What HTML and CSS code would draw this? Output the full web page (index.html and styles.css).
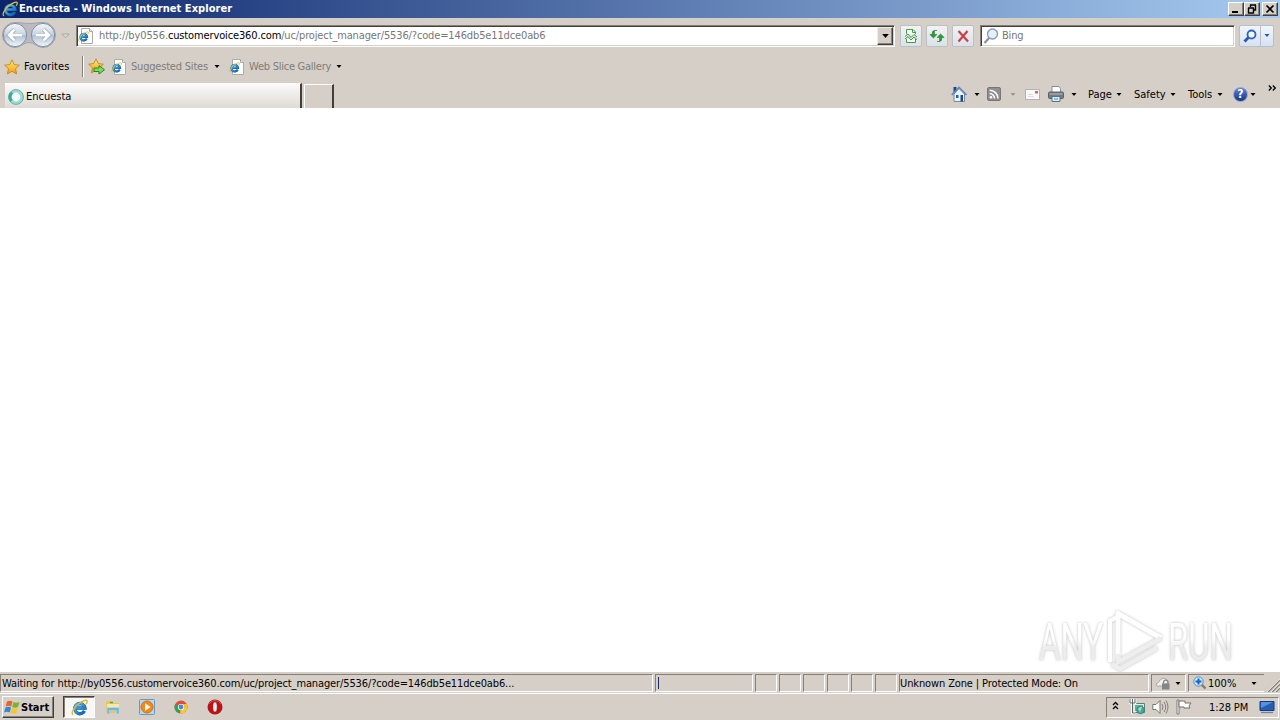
FILE: index.html
```html
<!DOCTYPE html>
<html lang="en">
<head>
<meta charset="UTF-8" />
<title>Encuesta - Windows Internet Explorer</title>
<link rel="stylesheet" href="styles.css">
</head>
<body>
<svg width="0" height="0" class="defs">
  <defs>
    <linearGradient id="blueRing" x1="0" y1="0" x2="1" y2="1">
      <stop offset="0" stop-color="#5cc4f2" /><stop offset="1" stop-color="#0b5fae" />
    </linearGradient>
    <linearGradient id="gold" x1="0" y1="0" x2="0" y2="1">
      <stop offset="0" stop-color="#fff07a" /><stop offset="1" stop-color="#f29a12" />
    </linearGradient>
    <linearGradient id="glass" x1="0" y1="0" x2="0" y2="1">
      <stop offset="0" stop-color="#f4f7fa" /><stop offset="0.48" stop-color="#c9d4e1" />
      <stop offset="0.52" stop-color="#b2c1d3" /><stop offset="1" stop-color="#f2f8fc" />
    </linearGradient>
    <linearGradient id="fade" x1="0" y1="0" x2="0" y2="1">
      <stop offset="0.45" stop-color="#ffffff" /><stop offset="0.6" stop-color="#e9e9e9" />
    </linearGradient>
  </defs>
  <symbol id="ie" viewBox="0 0 16 16">
    <path d="M12.600 11.200a4.800 4.800 0 1 1 .5-2.700H5" fill="none" stroke="#125a9f" stroke-width="3.200" />
    <path d="M12.600 11.200a4.800 4.800 0 1 1 .5-2.700H5" fill="none" stroke="url(#blueRing)" stroke-width="2.200" />
    <path d="M2 14.800C-.7 13.500 3 7.500 8 4c3.500-2.600 6.700-3.600 7.200-2.200.3.800-.3 2-1 3" fill="none" stroke="#e8b92c" stroke-width="1.300" />
  </symbol>
  <symbol id="iepage" viewBox="0 0 16 16">
    <path d="M3.500.5h8l3 3v12h-11z" fill="#fff" stroke="#a9abad" />
    <path d="M11.500.5v3h3" fill="#e4e8ee" stroke="#a9abad" />
    <use href="#ie" x="0" y="3" width="11" height="11" />
  </symbol>
  <symbol id="star" viewBox="0 0 16 16">
    <path d="M8 .8l2.200 4.800 5.200.6-3.900 3.500 1.100 5.200L8 12.300l-4.600 2.600 1.100-5.200L.6 6.200l5.200-.6z" fill="url(#gold)" stroke="#c98512" stroke-width=".9" />
  </symbol>
  <symbol id="down" viewBox="0 0 5 3">
    <path d="M0 0h5L2.500 3z" fill="currentColor" />
  </symbol>
</svg>

<div class="titlebar">
  <svg class="title-icon"><use href="#ie" /></svg>
  <span class="title">Encuesta - Windows Internet Explorer</span>
  <div class="win-buttons">
    <span class="win-btn"><svg viewBox="0 0 12 10"><path d="M2 8h6" stroke="#000" stroke-width="2" /></svg></span>
    <span class="win-btn"><svg viewBox="0 0 12 10"><path d="M4 1h6M4.500 1v2M9.500 1v5H8M2 4h6M2.500 4v5h5V4" fill="none" stroke="#000" stroke-width="1.400" /></svg></span>
    <span class="win-btn close"><svg viewBox="0 0 12 10"><path d="M2.500 1.500l7 7M9.500 1.500l-7 7" stroke="#000" stroke-width="1.700" /></svg></span>
  </div>
</div>

<div class="navbar">
  <svg class="travel" viewBox="0 0 58 30">
    <path d="M15 2.500c6 0 8 1 14 1s8-1 14-1a12.500 12.500 0 0 1 0 25c-6 0-8-5-14-5s-8 5-14 5a12.500 12.500 0 0 1 0-25z" fill="#b9bac2" stroke="#a2a2ab" />
    <circle cx="15" cy="15" r="11.600" fill="url(#glass)" stroke="#8190a2" />
    <circle cx="43" cy="15" r="11.600" fill="url(#glass)" stroke="#8190a2" />
    <path d="M22 15H9.500M14.500 9.500L9 15l5.500 5.500" fill="none" stroke="#8b9db2" stroke-width="4" />
    <path d="M22 15H9.500M14.500 9.500L9 15l5.500 5.500" fill="none" stroke="#fff" stroke-width="2.800" />
    <path d="M36 15h12.500M43.500 9.500L49 15l-5.500 5.500" fill="none" stroke="#8b9db2" stroke-width="4" />
    <path d="M36 15h12.500M43.500 9.500L49 15l-5.500 5.500" fill="none" stroke="#fff" stroke-width="2.800" />
  </svg>
  <svg class="recent" viewBox="0 0 9 6"><path d="M.8 1h7.400L4.500 4.800z" fill="#d8d8d5" stroke="#aaa8a2" /></svg>
  <div class="field address">
    <svg class="i16"><use href="#iepage" /></svg>
    <span class="url">http://by0556.<b>customervoice360.com</b>/uc/project_manager/5536/?code=146db5e11dce0ab6</span>
    <span class="combo"><svg class="arrow wide"><use href="#down" /></svg></span>
  </div>
  <div class="tools">
    <span class="tool"><svg class="i16" viewBox="0 0 16 16"><path d="M3.500 6V1.500H10L12.500 4v2M3.500 11v3.500h9V11M9.500 1.500v3h3" fill="#f5faf4" stroke="#4a9a50" /><path d="M2 8.500l3-2.500 3 3.500 3-3 3 2.500M2 11l3-2.500 3 3.500 3-3 3 2.500" fill="none" stroke="#3f9947" /></svg></span>
    <span class="tool"><svg class="i16" viewBox="0 0 16 16"><path d="M8 2.500H5.500v4H8L4.400 10 .8 6.500h2.400V5q0-2.500 2.600-2.500zM8 13.500h2.500v-4H8L11.600 6l3.600 3.500h-2.400V11q0 2.500-2.600 2.500z" fill="#2e9a35" stroke="#21742a" stroke-width=".5" /></svg></span>
    <span class="tool"><svg class="i16" viewBox="0 0 16 16"><path d="M3.500 3L13 13.500M12.500 3L3.500 13.500" stroke="#c9444a" stroke-width="2.300" /></svg></span>
  </div>
  <div class="field search">
    <svg class="i16" viewBox="0 0 16 16"><path d="M6.500 9.500L1.500 15" stroke="#8b8f98" stroke-width="2.200" /><circle cx="9.500" cy="6" r="5" fill="#e3f0fa" stroke="#8b9cae" stroke-width="1.400" /></svg>
    <span>Bing</span>
  </div>
  <div class="go">
    <span><svg class="i16" viewBox="0 0 16 16"><path d="M6.500 9.500L2.500 13.500" stroke="#2356b8" stroke-width="2.800" /><circle cx="9.500" cy="6.500" r="4" fill="#f3f9ff" stroke="#2c62c8" stroke-width="1.800" /></svg></span>
    <span class="go-drop"><svg class="arrow"><use href="#down" /></svg></span>
  </div>
</div>

<div class="favbar">
  <svg class="i16"><use href="#star" /></svg>
  <span class="favorites">Favorites</span>
  <span class="sep"></span>
  <svg class="add" viewBox="0 0 18 17"><use href="#star" width="16" height="16" /><path d="M6 10h5V7.500l5.500 4.300L11 16v-2.500H6z" fill="#7ed957" stroke="#24892b" /></svg>
  <svg class="i16 ml"><use href="#iepage" /></svg>
  <span class="link suggested">Suggested Sites</span>
  <svg class="arrow"><use href="#down" /></svg>
  <svg class="i16 ml2"><use href="#iepage" /></svg>
  <span class="link slices">Web Slice Gallery</span>
  <svg class="arrow"><use href="#down" /></svg>
</div>

<div class="tabrow">
  <div class="tab">
    <svg class="i16" viewBox="0 0 16 16"><circle cx="8" cy="8" r="6" fill="#f4fbfa" stroke="#9adccf" stroke-width="3.200" /><path d="M3.500 12A6 6 0 0 1 4 3.500" fill="none" stroke="#35ad97" stroke-width="3" /><circle cx="8" cy="8" r="7.400" fill="none" stroke="#5b9fa0" stroke-width=".8" /></svg>
    <span>Encuesta</span>
  </div>
  <div class="newtab"></div>
  <div class="commands">
    <svg class="home" viewBox="0 0 16 16"><path d="M2.500 1h3v6h-3z" fill="#27408b" /><path d="M3 8l5-5.500L13.500 8v7.500H3z" fill="#edf3fb" stroke="#6f88ad" /><path d="M.7 9L8 1.500 15.500 9" fill="none" stroke="#6588bc" stroke-width="1.700" /><path d="M5 9h2.500v3H5z" fill="#285e9b" /><path d="M9.500 9H12v6.500H9.500z" fill="#204a7c" /></svg>
    <svg class="arrow a1"><use href="#down" /></svg>
    <svg class="rss" viewBox="0 0 14 14"><rect x=".5" y=".5" width="13" height="13" rx="1.500" fill="#8f8f8f" stroke="#777" /><circle cx="4" cy="10.300" r="1.300" fill="#fff" /><path d="M2.700 6.500a4.800 4.800 0 0 1 4.800 4.900M2.700 3.200a8.200 8.200 0 0 1 8.200 8.200" fill="none" stroke="#fff" stroke-width="1.500" /></svg>
    <svg class="arrow a2 dim"><use href="#down" /></svg>
    <svg class="mail" viewBox="0 0 15 11"><rect x=".5" y=".5" width="14" height="10" fill="#faf9fb" stroke="#b5b2b7" /><path d="M10 2h3v2.500h-3z" fill="#d4606a" /><path d="M3 5.500h5M3 7.500h6" stroke="#dddce3" /></svg>
    <svg class="printer" viewBox="0 0 16 16"><path d="M4 .5h7l1.500 2v5H4z" fill="#fff" stroke="#878b92" /><rect x=".5" y="6" width="15" height="6.500" rx="1.200" fill="#777b83" stroke="#5d6167" /><path d="M1.500 8h13" stroke="#b8bbc2" /><path d="M4 10.500h8v5H4z" fill="#d9eefa" stroke="#5d738b" /><path d="M6 13h4" stroke="#3c96c7" /></svg>
    <svg class="arrow a3"><use href="#down" /></svg>
    <span class="cmd page">Page</span><svg class="arrow"><use href="#down" /></svg>
    <span class="cmd safety">Safety</span><svg class="arrow"><use href="#down" /></svg>
    <span class="cmd tools-menu">Tools</span><svg class="arrow"><use href="#down" /></svg>
    <span class="help">?</span><svg class="arrow a4"><use href="#down" /></svg>
    <svg class="more" viewBox="0 0 8 6"><path d="M.8.5L3.300 3 .8 5.500M4.800.5L7.300 3 4.800 5.500" fill="none" stroke="#000" stroke-width="1.300" /></svg>
  </div>
</div>

<div class="page-area">
  <svg class="watermark" viewBox="0 0 200 70">
    <g fill="url(#fade)" font-family="Roboto, sans-serif" font-size="52">
      <text x="3" y="51.500" textLength="64" lengthAdjust="spacingAndGlyphs">ANY</text>
      <text x="132" y="51.500" textLength="65" lengthAdjust="spacingAndGlyphs">RUN</text>
    </g>
    <path d="M74 54V13l8-4.500" fill="none" stroke="#fff" stroke-width="4" />
    <path d="M82 50V5.500L125 30" fill="none" stroke="#fff" stroke-width="5" stroke-linejoin="round" />
    <path d="M82 46v8l43-24M76 56l8 5 37-21" fill="none" stroke="#ececec" stroke-width="4.500" />
  </svg>
</div>

<div class="statusbar">
  <div class="panel message"><span>Waiting for http://by0556.customervoice360.com/uc/project_manager/5536/?code=146db5e11dce0ab6...</span></div>
  <div class="panel progress"><i></i></div>
  <div class="panel cell"></div>
  <div class="panel cell"></div>
  <div class="panel cell"></div>
  <div class="panel cell"></div>
  <div class="panel cell"></div>
  <div class="panel cell"></div>
  <div class="panel zone"><span>Unknown Zone | Protected Mode: On</span></div>
  <div class="panel lock">
    <svg class="i16" viewBox="0 0 16 16"><path d="M1 9q3-1 4-4 3-3 6-1l2 3-4 4H2z" fill="#f0f0f0" stroke="#aaa" /><path d="M8.500 9V7.500a2.300 2.300 0 0 1 4.600 0V9" fill="none" stroke="#888" stroke-width="1.300" /><path d="M7 8.500h7.500v6H7z" fill="#858585" /></svg>
    <svg class="arrow"><use href="#down" /></svg>
  </div>
  <div class="panel zoom">
    <svg class="zoom-icon" viewBox="0 0 14 14"><path d="M8.500 8.500l4 4" stroke="#947658" stroke-width="2.400" /><circle cx="5.500" cy="5.500" r="4.700" fill="#d1e9fb" stroke="#4a8cce" /><path d="M5.500 2.500v6M2.500 5.500h6" stroke="#1764c4" stroke-width="2" /></svg>
    <span class="percent">100%</span>
    <svg class="arrow"><use href="#down" /></svg>
  </div>
  <svg class="grip" viewBox="0 0 13 13"><path d="M1 13L13 1M5 13l8-8M9 13l4-4" stroke="#858078" stroke-width="1.500" /><path d="M0 13L13 0M4 13l9-9M8 13l5-5" stroke="#fff" stroke-width=".6" /></svg>
</div>

<div class="taskbar">
  <div class="start">
    <svg viewBox="0 0 17 16"><path d="M3 2.500q3-1.500 5.500 0L7.200 7.500q-2.700-1.300-5.500 0z" fill="#ec6423" /><path d="M9.500 3q2.800 1.300 6 0l-1.500 5q-3 1.300-5.800 0z" fill="#79b530" /><path d="M1.500 8.500q2.800-1.400 5.500 0L5.700 13.500Q3 12.200 0 13.500z" fill="#3288d3" /><path d="M8 9q2.700 1.300 5.800 0l-1.400 5q-3 1.300-5.800 0z" fill="#fac22d" /></svg>
    <b>Start</b>
  </div>
  <div class="task-active"><svg><use href="#ie" /></svg></div>
  <svg class="task-icon" viewBox="0 0 16 16"><path d="M1 2h6l1.500 2H14v10H1z" fill="#edc45a" /><path d="M2 5h12v6H2z" fill="#fbe9a3" /><path d="M2 8.500h12V15h-2.500v-3.500h-7V15H2z" fill="#70b5df" stroke="#b5dcf2" stroke-width=".6" /><path d="M5 3.500h3" stroke="#4ea75c" stroke-width="1.400" /></svg>
  <svg class="task-icon" viewBox="0 0 16 16"><rect x=".5" y=".5" width="15" height="15" rx="1" fill="#b5d9f4" stroke="#5f9bc9" /><circle cx="8" cy="8" r="6" fill="#f48919" stroke="#d66f0c" /><path d="M6 4.300L11.500 8 6 11.700z" fill="#fff" /></svg>
  <svg class="task-icon" viewBox="0 0 16 16"><circle cx="8" cy="8" r="6.500" fill="#e44b3b" /><path d="M8 8L2.300 4.900A6.500 6.500 0 0 0 7 14.500z" fill="#30a452" /><path d="M8 8h6.300A6.500 6.500 0 0 1 7 14.500z" fill="#fbc92e" /><path d="M8 5h5.800a6.500 6.500 0 0 1 .6 3L10.500 9z" fill="#f6bd27" /><circle cx="8" cy="8" r="3.100" fill="#fff" /><circle cx="8" cy="8" r="2.400" fill="#4289e8" /></svg>
  <svg class="task-icon" viewBox="0 0 16 16"><circle cx="8" cy="8" r="7.500" fill="#b91317" /><path d="M2 5a7 7 0 0 1 12 0" fill="none" stroke="#da5550" /><ellipse cx="8" cy="8" rx="2.300" ry="5.200" fill="#f5e9e5" stroke="#840a0d" stroke-width=".7" /></svg>
  <div class="tray">
    <svg class="chev" viewBox="0 0 7 9"><path d="M1 4l2.500-2.500L6 4M1 8l2.500-2.500L6 8" fill="none" stroke="#000" stroke-width="1.300" /></svg>
    <svg class="net" viewBox="0 0 16 16"><path d="M4.500 4.500h11v9h-11z" fill="#dcece7" stroke="#5d7d7a" /><path d="M6 6h8v6H6z" fill="#64ada3" /><path d="M1 0v4h5V0M3.500 0v14h3" fill="none" stroke="#fff" stroke-width="2.600" /><path d="M1 0v4h5V0M3.500 0v14h3" fill="none" stroke="#5a6968" /><circle cx="11.500" cy="11" r="3.800" fill="#42aaa0" stroke="#2e7875" stroke-width=".7" /><path d="M9 10q2-3 4-2l-1 3-1 2z" fill="#a4dda1" /></svg>
    <svg class="sound" viewBox="0 0 17 16"><path d="M.8 5.500H4L8 1.500v13l-4-4H.8z" fill="#fff" stroke="#77756f" /><path d="M10 5q2 3 0 6M12 3q3.500 5 0 10M14 1.500q4 6.500 0 13" fill="none" stroke="#85827c" /></svg>
    <svg class="flag" viewBox="0 0 16 16"><path d="M1 1h2v14H1z" fill="#fff" stroke="#74716b" stroke-width=".9" /><path d="M3 2h6v2h6l-2 3 1 2H8V8H3z" fill="#fff" stroke="#74716b" /></svg>
    <span class="clock">1:28 PM</span>
    <svg class="desk" viewBox="0 0 16 14"><path d="M1 1.500h14v9H1z" fill="#245eb5" stroke="#163d78" /><path d="M2 2h12L2 8z" fill="#5591dd" /><path d="M2 12.500h12" stroke="#718196" stroke-width="1.300" /></svg>
  </div>
</div>
</body>
</html>
```
FILE: styles.css
```css
* {
  box-sizing: border-box;
}
body {
  margin: 0;
  width: 1280px;
  height: 720px;
  overflow: hidden;
  display: flex;
  flex-direction: column;
  background: #d5cfc8;
  color: #000;
  font-family: Tahoma, "DejaVu Sans Condensed", "DejaVu Sans", sans-serif;
  font-size: 11px;
  line-height: 14px;
  white-space: nowrap;
}
svg {
  flex: none;
  display: block;
}
.defs {
  position: absolute;
}
.i16 {
  width: 16px;
  height: 16px;
}
.arrow {
  width: 6px;
  height: 3px;
}
.wide {
  width: 7px;
  height: 4px;
}
.dim {
  color: #9a9791;
}

/* title bar */
.titlebar {
  height: 18px;
  flex: none;
  display: flex;
  align-items: center;
  padding: 0 2px;
  background: linear-gradient(90deg, #0b246b, #a6caf0);
  color: #fff;
}
.title-icon {
  width: 16px;
  height: 16px;
}
.title {
  margin-left: 1px;
  font-weight: bold;
  letter-spacing: 0.05px;
}
.win-buttons {
  margin-left: auto;
  display: flex;
}
.win-btn {
  width: 16px;
  height: 14px;
  padding: 1px;
  background: #d5cfc8;
  border: 1px solid;
  border-color: #fff #404040 #404040 #fff;
  box-shadow: inset -1px -1px #858078;
}
.win-btn svg {
  width: 12px;
  height: 10px;
}
.close {
  margin-left: 2px;
}

/* address row */
.navbar {
  height: 35px;
  flex: none;
  display: flex;
  align-items: center;
}
.travel {
  width: 58px;
  height: 30px;
  margin-bottom: 1px;
}
.recent {
  width: 9px;
  height: 6px;
  margin: 0 6px 0 3px;
}
.field {
  height: 22px;
  display: flex;
  align-items: center;
  background: #fff;
  color: #777;
  border: 1px solid;
  border-color: #858078 #fff #fff #858078;
  box-shadow: inset 1px 1px #404040, inset -1px -1px #d5cfc8;
}
.address {
  width: 819px;
  padding: 0 1px 0 1px;
}
.url {
  margin: 1px 0 0 5px;
  letter-spacing: -0.135px;
}
.url b {
  color: #000;
  font-weight: normal;
}
.combo {
  width: 16px;
  height: 18px;
  margin-left: auto;
  display: flex;
  align-items: center;
  justify-content: center;
  color: #000;
  background: #d5cfc8;
  border: 1px solid;
  border-color: #eee #404040 #404040 #eee;
  box-shadow: inset -1px -1px #858078;
}
.tools {
  display: flex;
  gap: 4px;
  margin: 0 6px 0 5px;
}
.tool {
  width: 22px;
  height: 22px;
  display: flex;
  align-items: center;
  justify-content: center;
  background: linear-gradient(#f0f2f5, #dce2e9);
  border: 1px solid #bac0c6;
  border-radius: 2px;
}
.search {
  width: 255px;
  padding-left: 2px;
}
.search span {
  margin: 1px 0 0 3px;
  letter-spacing: -0.2px;
}
.go {
  width: 35px;
  height: 22px;
  margin-left: 4px;
  display: flex;
  color: #2358b6;
  background: linear-gradient(#f1f5fb, #d6e2f1);
  border: 1px solid #b5bfcd;
  border-radius: 2px;
}
.go span {
  display: flex;
  align-items: center;
  justify-content: center;
  width: 20px;
}
.go .go-drop {
  width: 13px;
  border-left: 1px solid #b5bfcd;
}

/* favorites row */
.favbar {
  height: 29px;
  flex: none;
  display: flex;
  align-items: center;
  padding: 0 0 2px 4px;
}
.favorites {
  width: 59px;
  padding-left: 4px;
  letter-spacing: 0.1px;
}
.sep {
  width: 2px;
  height: 21px;
  margin: 0 5px 0 3px;
  border-left: 1px solid #858078;
  border-right: 1px solid #fff;
}
.add {
  width: 18px;
  height: 17px;
  margin-left: -1px;
}
.ml {
  margin-left: 5px;
}
.ml2 {
  margin-left: 9px;
}
.link {
  margin-top: 1px;
  color: #807d79;
  letter-spacing: -0.2px;
}
.suggested {
  width: 87px;
  padding-left: 4px;
}
.slices {
  width: 91px;
  padding-left: 4px;
  letter-spacing: -0.25px;
}

/* tabs and command bar */
.tabrow {
  height: 26px;
  flex: none;
  display: flex;
  align-items: flex-end;
  padding-left: 5px;
}
.tab {
  width: 297px;
  height: 25px;
  display: flex;
  align-items: center;
  padding: 1px 0 0 3px;
  background: linear-gradient(#fbfaf9, #dedad5);
  border-top: 1px solid #fff;
  border-right: 2px solid #403e3b;
}
.tab span {
  margin-left: 2px;
}
.newtab {
  width: 30px;
  height: 24px;
  margin-left: 2px;
  border-top: 1px solid #fff;
  border-left: 1px solid #fff;
  border-right: 2px solid #403e3b;
}
.commands {
  height: 26px;
  flex: 1;
  margin-left: 617px;
  display: flex;
  align-items: center;
  padding-bottom: 2px;
}
.home {
  width: 16px;
  height: 16px;
}
.a1 {
  margin: 0 7px 0 7px;
}
.rss {
  width: 14px;
  height: 14px;
}
.a2 {
  margin: 0 9px 0 9px;
}
.mail {
  width: 15px;
  height: 11px;
}
.printer {
  width: 16px;
  height: 16px;
  margin-left: 8px;
}
.a3 {
  margin: 0 11px 0 7px;
}
.cmd {
  margin-top: 1px;
}
.page {
  width: 28px;
}
.safety {
  width: 36px;
  margin-left: 12px;
}
.tools-menu {
  width: 29px;
  margin-left: 12px;
}
.help {
  width: 15px;
  height: 15px;
  margin-left: 10px;
  border: 1px solid #8fa5d5;
  border-radius: 50%;
  background: linear-gradient(#6280ce, #173588);
  color: #fff;
  font-size: 12px;
  font-weight: bold;
  line-height: 13px;
  text-align: center;
}
.a4 {
  margin-left: 2px;
}
.more {
  width: 8px;
  height: 6px;
  margin: -12px 0 0 12px;
}

.page-area {
  height: 564px;
  flex: none;
  background: #fff;
}
.watermark {
  position: absolute;
  left: 1036px;
  top: 608px;
  width: 200px;
  height: 70px;
  overflow: visible;
  filter: drop-shadow(0 0 1.5px #b4b4b4);
  opacity: 0.85;
}

/* status bar */
.statusbar {
  height: 22px;
  flex: none;
  display: flex;
  gap: 2px;
  padding: 2px 0 2px;
  border-bottom: 1px solid #fff;
}
.panel {
  height: 18px;
  display: flex;
  align-items: center;
  border: 1px solid;
  border-color: #858078 #fff #fff #858078;
  letter-spacing: -0.12px;
}
.panel span {
  margin-top: 2px;
}
.message {
  width: 653px;
  padding-left: 1px;
}
.progress {
  width: 98px;
  padding-left: 2px;
}
.progress i {
  width: 1px;
  height: 12px;
  background: #16306b;
}
.cell {
  width: 22px;
}
.zone {
  width: 250px;
}
.lock {
  width: 35px;
  padding-left: 3px;
  gap: 4px;
}
.zoom {
  width: 76px;
  padding-left: 4px;
  border-right: none;
}
.zoom-icon {
  width: 14px;
  height: 14px;
}
.percent {
  width: 44px;
  padding-left: 1px;
  letter-spacing: 0;
}
.grip {
  width: 13px;
  height: 13px;
  margin: 5px 0 0 1px;
}

/* task bar */
.taskbar {
  height: 26px;
  flex: none;
  display: flex;
  align-items: center;
  padding: 0 1px 0 2px;
}
.start {
  width: 52px;
  height: 22px;
  display: flex;
  align-items: center;
  padding-left: 1px;
  border: 1px solid;
  border-color: #fff #404040 #404040 #fff;
  box-shadow: inset -1px -1px #858078;
}
.start svg {
  width: 17px;
  height: 16px;
}
.start b {
  margin-top: 1px;
}
.task-active {
  width: 32px;
  height: 22px;
  margin-left: 9px;
  padding: 2px 0 0 7px;
  background: #f8f7f5;
  border: 1px solid;
  border-color: #404040 #fff #fff #404040;
  box-shadow: inset 1px 1px #858078;
}
.task-active svg {
  width: 17px;
  height: 17px;
}
.task-icon {
  width: 16px;
  height: 16px;
  margin-left: 18px;
}
.task-active + .task-icon {
  margin-left: 10px;
}
.tray {
  width: 173px;
  height: 21px;
  margin-left: auto;
  display: flex;
  align-items: center;
  padding-left: 5px;
  border: 1px solid;
  border-color: #858078 #fff #fff #858078;
}
.chev {
  width: 7px;
  height: 9px;
  margin-bottom: 3px;
}
.net {
  width: 16px;
  height: 16px;
  margin-left: 10px;
}
.sound {
  width: 17px;
  height: 16px;
  margin-left: 7px;
}
.flag {
  width: 16px;
  height: 16px;
  margin-left: 7px;
}
.clock {
  width: 50px;
  margin: 1px 0 0 17px;
  letter-spacing: -0.1px;
}
.desk {
  width: 16px;
  height: 14px;
}
```
